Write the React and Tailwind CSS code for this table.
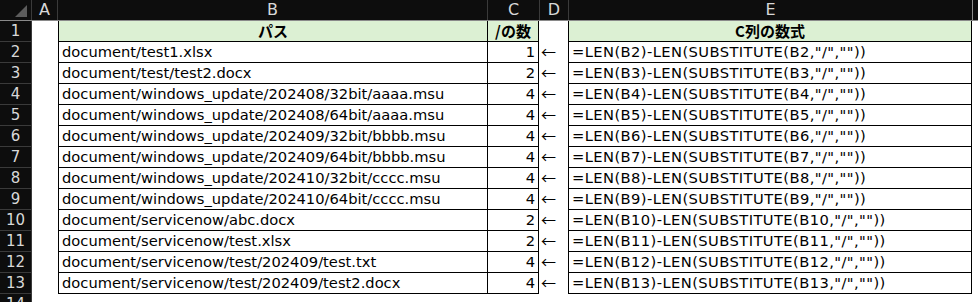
// App.jsx
const paths = [
  'document/test1.xlsx',
  'document/test/test2.docx',
  'document/windows_update/202408/32bit/aaaa.msu',
  'document/windows_update/202408/64bit/aaaa.msu',
  'document/windows_update/202409/32bit/bbbb.msu',
  'document/windows_update/202409/64bit/bbbb.msu',
  'document/windows_update/202410/32bit/cccc.msu',
  'document/windows_update/202410/64bit/cccc.msu',
  'document/servicenow/abc.docx',
  'document/servicenow/test.xlsx',
  'document/servicenow/test/202409/test.txt',
  'document/servicenow/test/202409/test2.docx',
];

const font = { fontFamily: '"DejaVu Sans", "Noto Sans CJK JP", sans-serif' };
const jp = { fontFamily: '"Noto Sans CJK JP", sans-serif' };

const RowHead = ({ children, last }) => (
  <div className={`w-[32px] h-[21px] shrink-0 bg-[#0d0d0d] text-[#d8d8d8] border-r border-[#3a3a3a] flex items-center justify-center text-[15px] ${last ? '' : 'border-b border-b-[#3a3a3a]'}`}>
    {children}
  </div>
);

const App = () => (
  <div className="w-[978px] h-[302px] overflow-hidden bg-white text-black text-[14.7px]" style={font}>
    {/* column headers */}
    <div className="flex h-[21px] bg-[#0d0d0d] border-b border-[#8a8a8a] text-[#d8d8d8] text-[16px]">
      <div className="w-[32px] shrink-0 border-r border-[#3a3a3a] flex items-end justify-end pr-[4px] pb-[3px]">
        <svg width="12" height="12" viewBox="0 0 12 12"><polygon points="12,0 12,12 0,12" fill="#5c5c5c" /></svg>
      </div>
      <div className="w-[26px] shrink-0 border-r border-[#3a3a3a] flex items-center justify-center">A</div>
      <div className="w-[430px] shrink-0 border-r border-[#3a3a3a] flex items-center justify-center">B</div>
      <div className="w-[52px] shrink-0 border-r border-[#3a3a3a] flex items-center justify-center">C</div>
      <div className="w-[29px] shrink-0 border-r border-[#3a3a3a] flex items-center justify-center">D</div>
      <div className="w-[404px] shrink-0 border-r border-[#8a8a8a] flex items-center justify-center">E</div>
      <div className="flex-1" />
    </div>

    {/* row 1 */}
    <div className="flex">
      <RowHead>1</RowHead>
      <div className="w-[26px] shrink-0" />
      <div className="w-[430px] h-[21px] shrink-0 bg-[#dcf0d3] border-l border-r border-b border-black flex items-center justify-center font-bold text-[15px]" style={jp}>パス</div>
      <div className="w-[51px] h-[21px] shrink-0 bg-[#dcf0d3] border-r border-b border-black flex items-center justify-center font-bold text-[15px]" style={jp}>/の数</div>
      <div className="w-[29px] shrink-0" />
      <div className="w-[404px] h-[21px] shrink-0 bg-[#dcf0d3] border-l border-r border-b border-black flex items-center justify-center font-bold text-[15px]" style={jp}>C列の数式</div>
    </div>

    {paths.map((p, i) => {
      const r = i + 2;
      const count = p.split('/').length - 1;
      return (
        <div key={r} className="flex">
          <RowHead>{r}</RowHead>
          <div className="w-[26px] shrink-0" />
          <div className="w-[430px] h-[21px] shrink-0 border-l border-r border-b border-black flex items-center pl-[3px] whitespace-nowrap">{p}</div>
          <div className="w-[51px] h-[21px] shrink-0 border-r border-b border-black flex items-center justify-end pr-[3px]">{count}</div>
          <div className="w-[29px] h-[21px] shrink-0 flex items-center pl-[2px] text-[15px]" style={jp}>←</div>
          <div className="w-[404px] h-[21px] shrink-0 border-l border-r border-b border-black flex items-center pl-[3px] whitespace-nowrap tracking-[0.42px]">
            {`=LEN(B${r})-LEN(SUBSTITUTE(B${r},"/",""))`}
          </div>
        </div>
      );
    })}

    <div className="flex">
      <RowHead last>14</RowHead>
    </div>
  </div>
);

export default App;
